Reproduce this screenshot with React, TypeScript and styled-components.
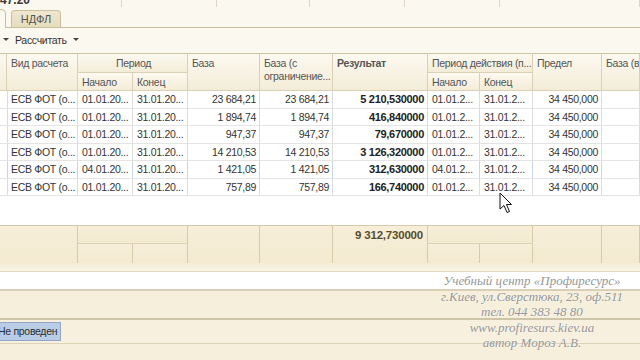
import styled, { createGlobalStyle } from 'styled-components'

const GlobalStyle = createGlobalStyle`
  html, body {
    margin: 0;
    padding: 0;
  }
  body {
    font-family: 'Liberation Sans', Arial, sans-serif;
    font-size: 10.5px;
    letter-spacing: -0.3px;
    color: #333333;
    background: #fbf8ef;
  }
`

// column widths taken from the grid lines of the original form
const COLS = '7px 71px 55px 55px 72px 73px 95px 52px 53px 69px 38px'

interface RowModel {
  kind: string
  start: string
  end: string
  base: string
  baseLimited: string
  result: string
  start2: string
  end2: string
  limit: string
}

const ROWS: RowModel[] = [
  { kind: 'ЕСВ ФОТ (о...', start: '01.01.20...', end: '31.01.20...', base: '23 684,21', baseLimited: '23 684,21', result: '5 210,530000', start2: '01.01.2...', end2: '31.01.2...', limit: '34 450,000' },
  { kind: 'ЕСВ ФОТ (о...', start: '01.01.20...', end: '31.01.20...', base: '1 894,74', baseLimited: '1 894,74', result: '416,840000', start2: '01.01.2...', end2: '31.01.2...', limit: '34 450,000' },
  { kind: 'ЕСВ ФОТ (о...', start: '01.01.20...', end: '31.01.20...', base: '947,37', baseLimited: '947,37', result: '79,670000', start2: '01.01.2...', end2: '31.01.2...', limit: '34 450,000' },
  { kind: 'ЕСВ ФОТ (о...', start: '01.01.20...', end: '31.01.20...', base: '14 210,53', baseLimited: '14 210,53', result: '3 126,320000', start2: '01.01.2...', end2: '31.01.2...', limit: '34 450,000' },
  { kind: 'ЕСВ ФОТ (о...', start: '04.01.20...', end: '31.01.20...', base: '1 421,05', baseLimited: '1 421,05', result: '312,630000', start2: '04.01.2...', end2: '31.01.2...', limit: '34 450,000' },
  { kind: 'ЕСВ ФОТ (о...', start: '01.01.20...', end: '31.01.20...', base: '757,89', baseLimited: '757,89', result: '166,740000', start2: '01.01.2...', end2: '31.01.2...', limit: '34 450,000' }
]

const Page = styled.div`
  position: relative;
  width: 640px;
  height: 360px;
  overflow: hidden;
  background: #fbf8ef;
  display: flex;
  flex-direction: column;
`

const TopStrip = styled.div`
  height: 7px;
  overflow: hidden;
  display: grid;
  grid-template-columns: 122px 95px 93px 95px 95px 1fr;
`

const TopSegment = styled.div`
  border-right: 1px solid #dcd6c6;
  font-weight: bold;
  font-size: 12px;
  letter-spacing: 0;
  line-height: 12px;
  margin-top: -6px;
  color: #3a3a3a;
`

const TabBar = styled.div`
  height: 20px;
  display: flex;
  align-items: flex-end;
  border-bottom: 1px solid #c9be9c;
`

const ActiveTab = styled.div`
  width: 16px;
  height: 19px;
  margin-left: -10px;
  margin-bottom: -1px;
  background: #fbf8ef;
  border: 1px solid #c9be9c;
  border-bottom: none;
  border-radius: 0 5px 0 0;
  box-sizing: border-box;
`

const Tab = styled.div`
  width: 50px;
  height: 17px;
  margin-left: 5px;
  box-sizing: border-box;
  background: linear-gradient(#efe7cf, #e6dcbd);
  border: 1px solid #cbbf9c;
  border-bottom: none;
  border-radius: 4px 4px 0 0;
  color: #555555;
  font-size: 11px;
  letter-spacing: 0;
  display: flex;
  align-items: center;
  justify-content: center;
`

const Toolbar = styled.div`
  height: 25px;
  display: flex;
  align-items: center;
  gap: 4px;
  padding-left: 1px;
  padding-bottom: 2px;
  box-sizing: border-box;
  color: #333333;
`

const Caret = styled.span`
  display: inline-block;
  width: 0;
  height: 0;
  border-left: 3px solid transparent;
  border-right: 3px solid transparent;
  border-top: 3px solid #444444;
  margin: 0 2px;
`

const TableBox = styled.div`
  height: 210px;
  display: flex;
  flex-direction: column;
  border-top: 1px solid #cfc5a6;
  box-sizing: border-box;
`

const HeaderGrid = styled.div`
  display: grid;
  grid-template-columns: ${COLS};
  grid-template-rows: 19px 18px;
`

const FooterGrid = styled.div`
  display: grid;
  grid-template-columns: ${COLS};
  grid-template-rows: 18px 20px;
  border-top: 1px solid #d4c9aa;
  box-sizing: border-box;
  height: 38px;
`

const HeadCell = styled.div<{ $col: string; $row: string; $center?: boolean; $bold?: boolean }>`
  grid-column: ${p => p.$col};
  grid-row: ${p => p.$row};
  box-sizing: border-box;
  border-right: 1px solid #d9d0b5;
  border-bottom: 1px solid #d9d0b5;
  background: linear-gradient(#fcf9f0, #f3ecd7);
  color: #555555;
  font-weight: ${p => (p.$bold ? 'bold' : 'normal')};
  text-align: ${p => (p.$center ? 'center' : 'left')};
  padding: 3px 2px 0 4px;
  line-height: 12.5px;
  white-space: nowrap;
  overflow: hidden;
`

const FootCell = styled.div<{ $col: string; $row: string; $split?: boolean }>`
  grid-column: ${p => p.$col};
  grid-row: ${p => p.$row};
  box-sizing: border-box;
  border-right: 1px solid #d6cba9;
  border-bottom: 1px solid ${p => (p.$split ? '#ddd3b7' : '#d6cba9')};
  background: linear-gradient(#f6eed8, #f3ead0);
  color: #5a4c2c;
  font-weight: bold;
  font-size: 11.5px;
  letter-spacing: -0.2px;
  text-align: right;
  padding: 3px 4px 0 4px;
  line-height: 13px;
  white-space: nowrap;
`

const Body = styled.div`
  flex: 1;
  background: #ffffff;
`

const Row = styled.div`
  display: grid;
  grid-template-columns: ${COLS};
  height: 17.5px;
`

const Cell = styled.div<{ $right?: boolean; $bold?: boolean; $selected?: boolean }>`
  box-sizing: border-box;
  border-right: 1px solid ${p => (p.$selected ? '#c7d5ea' : '#dcdcdc')};
  border-bottom: 1px solid #e4e4e4;
  padding: 0 3px 0 4px;
  line-height: 16px;
  white-space: nowrap;
  overflow: hidden;
  text-align: ${p => (p.$right ? 'right' : 'left')};
  font-weight: ${p => (p.$bold ? 'bold' : 'normal')};
  color: ${p => (p.$bold ? '#222222' : '#333333')};
  font-size: ${p => (p.$bold ? '11px' : '10.5px')};
`

const Divider = styled.div`
  height: 9px;
  box-sizing: border-box;
  border-bottom: 1px solid #e3d9bf;
  background: linear-gradient(#f4ecd6, #f8f3e4);
`

const InputBar = styled.div`
  height: 17px;
  background: #ffffff;
  border-bottom: 2px solid #d8cfb6;
`

const Panel = styled.div`
  height: 29px;
  box-sizing: border-box;
  background: #f6efdc;
  border-bottom: 2px solid #cdc4aa;
`

const StatusBar = styled.div`
  height: 24px;
  box-sizing: border-box;
  display: flex;
  align-items: center;
  background: #f7f0de;
  border-bottom: 1px solid #ddd3b8;
`

const StatusButton = styled.div`
  margin-left: -6px;
  width: 67px;
  height: 19px;
  box-sizing: border-box;
  padding-left: 3px;
  background: #b9cde6;
  border: 1px solid #8fa6c5;
  color: #2e2e2e;
  font-size: 10.5px;
  line-height: 17px;
  white-space: nowrap;
  overflow: hidden;
`

const Rest = styled.div`
  flex: 1;
  background: #f6efdc;
`

const Watermark = styled.div`
  position: absolute;
  left: 432px;
  top: 273px;
  width: 200px;
  text-align: center;
  font-family: 'Liberation Serif', 'Times New Roman', serif;
  font-style: italic;
  font-size: 13px;
  letter-spacing: 0;
  line-height: 15.5px;
  color: #979797;
  text-shadow: 0 0 2px rgba(255, 255, 255, 0.8);
`

const Cursor = styled.svg`
  position: absolute;
  left: 499px;
  top: 192px;
`

const App = () => {
  return (
    <>
      <GlobalStyle />
      <Page>
        <TopStrip>
          <TopSegment>47.20</TopSegment>
          <TopSegment />
          <TopSegment />
          <TopSegment />
          <TopSegment />
          <TopSegment />
        </TopStrip>
        <TabBar>
          <ActiveTab />
          <Tab>НДФЛ</Tab>
        </TabBar>
        <Toolbar>
          <Caret />
          <span>Рассчитать</span>
          <Caret />
        </Toolbar>
        <TableBox>
          <HeaderGrid>
            <HeadCell $col="1" $row="1 / 3" />
            <HeadCell $col="2" $row="1 / 3">Вид расчета</HeadCell>
            <HeadCell $col="3 / 5" $row="1" $center>Период</HeadCell>
            <HeadCell $col="3" $row="2">Начало</HeadCell>
            <HeadCell $col="4" $row="2">Конец</HeadCell>
            <HeadCell $col="5" $row="1 / 3">База</HeadCell>
            <HeadCell $col="6" $row="1 / 3">
              База (с
              <br />
              ограничение...
            </HeadCell>
            <HeadCell $col="7" $row="1 / 3" $bold>
              Результат
            </HeadCell>
            <HeadCell $col="8 / 10" $row="1">Период действия (п...</HeadCell>
            <HeadCell $col="8" $row="2">Начало</HeadCell>
            <HeadCell $col="9" $row="2">Конец</HeadCell>
            <HeadCell $col="10" $row="1 / 3">Предел</HeadCell>
            <HeadCell $col="11" $row="1 / 3">База (вы...</HeadCell>
          </HeaderGrid>
          <Body>
            {ROWS.map((r, i) => {
              const sel = i === 4
              return (
                <Row key={i}>
                  <Cell $selected={sel} />
                  <Cell $selected={sel}>{r.kind}</Cell>
                  <Cell $selected={sel}>{r.start}</Cell>
                  <Cell $selected={sel}>{r.end}</Cell>
                  <Cell $selected={sel} $right>
                    {r.base}
                  </Cell>
                  <Cell $selected={sel} $right>
                    {r.baseLimited}
                  </Cell>
                  <Cell $selected={sel} $right $bold>
                    {r.result}
                  </Cell>
                  <Cell $selected={sel}>{r.start2}</Cell>
                  <Cell $selected={sel}>{r.end2}</Cell>
                  <Cell $selected={sel} $right>
                    {r.limit}
                  </Cell>
                  <Cell $selected={sel} />
                </Row>
              )
            })}
          </Body>
          <FooterGrid>
            <FootCell $col="1" $row="1 / 3" />
            <FootCell $col="2" $row="1 / 3" />
            <FootCell $col="3 / 5" $row="1" $split />
            <FootCell $col="3" $row="2" />
            <FootCell $col="4" $row="2" />
            <FootCell $col="5" $row="1 / 3" />
            <FootCell $col="6" $row="1 / 3" />
            <FootCell $col="7" $row="1 / 3">9 312,730000</FootCell>
            <FootCell $col="8 / 10" $row="1" $split />
            <FootCell $col="8" $row="2" />
            <FootCell $col="9" $row="2" />
            <FootCell $col="10" $row="1 / 3" />
            <FootCell $col="11" $row="1 / 3" />
          </FooterGrid>
        </TableBox>
        <Divider />
        <InputBar />
        <Panel />
        <StatusBar>
          <StatusButton>Не проведен</StatusButton>
        </StatusBar>
        <Rest />
        <Watermark>
          Учебный центр «Профиресурс»
          <br />
          г.Киев, ул.Сверстюка, 23, оф.511
          <br />
          тел. 044 383 48 80
          <br />
          www.profiresurs.kiev.ua
          <br />
          автор Мороз А.В.
        </Watermark>
        <Cursor width="14" height="22" viewBox="0 0 14 22">
          <path d="M1 1 L1 17 L5 13.5 L8 20.5 L10.5 19.5 L7.5 12.5 L12.5 12.5 Z" fill="#ffffff" stroke="#111111" strokeWidth="1" strokeLinejoin="round" />
        </Cursor>
      </Page>
    </>
  )
}

export default App
